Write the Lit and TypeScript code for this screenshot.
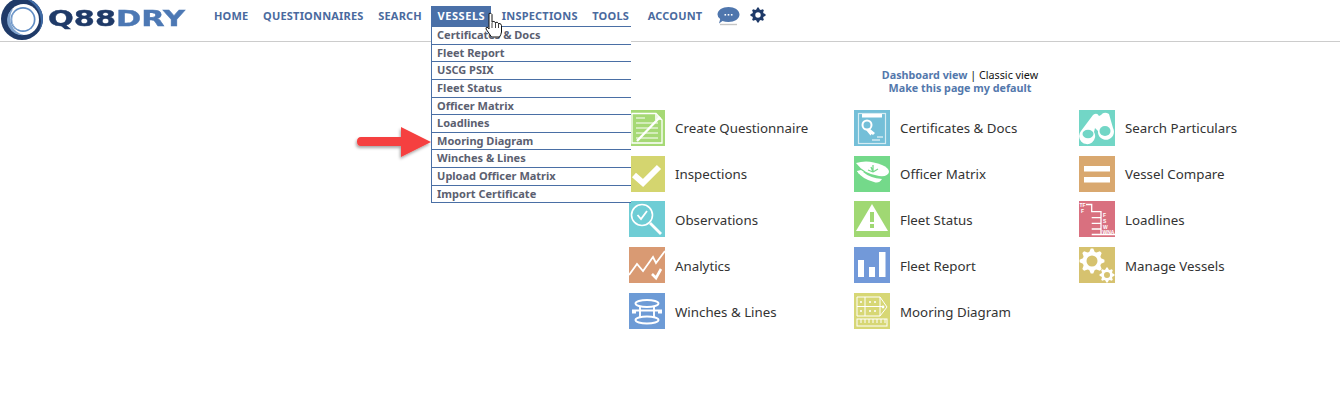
import { LitElement, html, css, svg } from "lit";
import { customElement } from "lit/decorators.js";

const gear = (cx: number, cy: number, r: number, teeth: number, hole: number) => {
  const pts: string[] = [];
  const n = teeth * 4;
  for (let i = 0; i < n; i++) {
    const a = ((i - 0.5) / n) * Math.PI * 2;
    const rad = i % 4 < 2 ? r : r * 0.76;
    pts.push(`${(cx + rad * Math.cos(a)).toFixed(2)},${(cy + rad * Math.sin(a)).toFixed(2)}`);
  }
  return svg`<path fill-rule="evenodd" d="M${pts.join("L")}Z M${cx - hole},${cy}a${hole},${hole} 0 1,0 ${hole * 2},0a${hole},${hole} 0 1,0 ${-hole * 2},0Z"/>`;
};

const icons: Record<string, unknown> = {
  create: svg`<g fill="none" stroke="#fff" stroke-width="1"><path stroke-width="1.3" d="M3 3.5H27L33 10V33H3Z"/><path d="M7 8H16M7 13H29M7 18H29M7 23H29M7 28H29"/></g><path d="M8 31L31 7" stroke="#fff" stroke-width="2.4"/><path d="M26 3.5V10H33" fill="#fff" opacity=".8"/>`,
  check: svg`<path d="M5 19L14 27L30 11" fill="none" stroke="#fff" stroke-width="6"/>`,
  observe: svg`<circle cx="13" cy="14" r="10.5" fill="none" stroke="#fff" stroke-width="1.6"/><path d="M21 22L32 33" stroke="#fff" stroke-width="2.8"/><path d="M8.5 14L12 18L18 10" fill="none" stroke="#fff" stroke-width="1.8"/>`,
  analytics: svg`<path d="M0 28L8 17L14 24L24 10L27 16L36 4" fill="none" stroke="#fff" stroke-width="1.8"/><path d="M23 27L27 31L32 22" fill="none" stroke="#fff" stroke-width="2.6"/>`,
  winch: svg`<g fill="none" stroke="#fff" stroke-width="1.9"><ellipse cx="18" cy="10.5" rx="11.5" ry="3.5"/><ellipse cx="18" cy="27" rx="11.5" ry="3.5"/><path d="M11 13V24.5M25 13V24.5"/></g><path d="M3 16.5H33V20.5H29V18.5H7V20.5H3Z" fill="#fff"/>`,
  cert: svg`<rect x="4.5" y="3.5" width="27" height="30" fill="none" stroke="#fff" stroke-opacity=".7" stroke-width="1.2"/><rect x="8" y="4" width="20" height="3.5" fill="#fff"/><circle cx="13" cy="15" r="4.5" fill="none" stroke="#fff" stroke-width="2"/><path d="M15.5 18.5L21 23L19 25L17.5 24L16.5 25.5L12 20Z" fill="#fff"/><path d="M23 27H29M18 30H26" stroke="#fff" stroke-width="1"/>`,
  hat: svg`<path d="M2 7Q14 3 28 9Q35 12 35 16Q34 21 25 20Q10 18 2 7Z" fill="#fff"/><path d="M3 15Q8 23 20 26Q25 28 28 23Q16 22 9 16Z" fill="#fff"/><path d="M3 15L7 14L10 16L5 18Z" fill="#fff"/><path d="M17 11L19 16M19 16L14 14M19 16L24 13M19 9V16" stroke="#74d98a" stroke-width="1.3" fill="none"/>`,
  warn: svg`<path d="M18 3L34 30H2Z" fill="#fff"/><rect x="16" y="11" width="4" height="10" fill="#a0d873"/><rect x="16" y="23" width="4" height="4" fill="#a0d873"/>`,
  bars: svg`<rect x="4" y="13" width="6" height="17" fill="#fff"/><rect x="15" y="20" width="6" height="10" fill="#fff"/><rect x="25" y="5" width="6.5" height="25" fill="#fff"/>`,
  mooring: svg`<g fill="none" stroke="#fff" stroke-width="1"><path d="M3 4H26L33 14L26 23H3Z"/><path d="M11 4V23M26 4V23M3 13.5H28"/><rect x="3" y="26" width="30" height="7"/><path d="M7 26V30M11 26V30M15 26V30M19 26V30M23 26V30M27 26V30M31 26V30"/></g><g fill="#fff"><circle cx="7" cy="9" r="1"/><circle cx="16" cy="9" r="1"/><circle cx="21" cy="9" r="1"/><circle cx="7" cy="18" r="1"/><circle cx="16" cy="18" r="1"/><circle cx="21" cy="18" r="1"/><circle cx="29" cy="14" r="1.4"/></g>`,
  binoc: svg`<path d="M2 21L14 5Q18 2 20 6L22 5Q25 1 30 4L34 18A8 8 0 1 1 19 21L16 18L15 22A8 8 0 1 1 2 21Z" fill="#fff"/><ellipse cx="9" cy="24" rx="5.5" ry="4.2" fill="#72d6c6"/><ellipse cx="26" cy="21" rx="5.5" ry="5" fill="#72d6c6"/>`,
  equal: svg`<rect x="5" y="10" width="26" height="5.5" fill="#fff"/><rect x="5" y="21" width="26" height="5.5" fill="#fff"/>`,
  load: svg`<path d="M7 3.5H12.7V10.7H22V33.5H36M12.7 16.7H22M12.7 22.3H22M12.7 28H22M12.7 33.5H22" fill="none" stroke="#fff" stroke-width="1.3"/><g fill="#fff" font-family="Liberation Sans, sans-serif" font-weight="700" font-size="5"><text x="0.5" y="6">TF</text><text x="2" y="11.5">F</text><text x="24" y="16">F</text><text x="24" y="22">S</text><text x="24" y="27.5">W</text><text x="23.5" y="32.5" textLength="12" lengthAdjust="spacingAndGlyphs">WNA</text></g>`,
  gears: svg`<g fill="#fff">${gear(13, 14, 12.5, 8, 5.5)}${gear(28, 28, 7.5, 8, 3)}</g>`,
};

const items = [
  ["Create Questionnaire", "#a6d975", "create", true],
  ["Certificates & Docs", "#74bfd8", "cert", false],
  ["Search Particulars", "#72d6c6", "binoc", false],
  ["Inspections", "#d4d56f", "check", true],
  ["Officer Matrix", "#74d98a", "hat", false],
  ["Vessel Compare", "#d9a86f", "equal", false],
  ["Observations", "#6fcdd5", "observe", false],
  ["Fleet Status", "#a0d873", "warn", false],
  ["Loadlines", "#d9707f", "load", false],
  ["Analytics", "#d99a73", "analytics", false],
  ["Fleet Report", "#7299d9", "bars", false],
  ["Manage Vessels", "#d6c26f", "gears", false],
  ["Winches & Lines", "#6d9bd6", "winch", false],
  ["Mooring Diagram", "#d7d775", "mooring", false],
] as const;

const menu = ["Certificates & Docs", "Fleet Report", "USCG PSIX", "Fleet Status", "Officer Matrix", "Loadlines", "Mooring Diagram", "Winches & Lines", "Upload Officer Matrix", "Import Certificate"];

@customElement("app-root")
export class AppRoot extends LitElement {
  static styles = css`
    :host { display: block; position: relative; height: 415px; overflow: hidden; background: #fff; font-family: "Noto Sans", "DejaVu Sans", sans-serif; }
    header { display: flex; align-items: flex-start; height: 41px; border-bottom: 1px solid #ccc; box-sizing: content-box; }
    .logo { display: flex; width: 214px; flex: none; }
    .ring { display: block; flex: none; }
    .word { font: bold 22px/1 "DejaVu Sans", sans-serif; transform: scaleX(1.38); transform-origin: left top; margin: 8px 0 0 4px; -webkit-text-stroke: .4px currentColor; white-space: nowrap; color: #1f3a68; height: 22px; }
    .word span { color: #4c78b4; }
    nav { display: flex; align-items: flex-start; padding-top: 6px; gap: 14.6px; }
    nav a { display: block; height: 20px; line-height: 20px; font-size: 11px; font-weight: 700; letter-spacing: .2px; color: #4a6a9e; white-space: nowrap; }
    nav .account { margin-left: 4px; }
    .vessels { position: relative; margin-right: -4px; margin-left: -6px; }
    .vessels a { background: #4a70a8; color: #fff; padding: 0 6px 0 7px; letter-spacing: .55px; }
    .drop { position: absolute; left: 0; top: 20px; width: 200px; box-sizing: border-box; background: #fff; border-left: 1px solid #4a6fa5; border-top: 1px solid #4a6fa5; z-index: 2; }
    .drop div { height: 17.65px; box-sizing: border-box; border-bottom: 1px solid #4a6fa5; padding-left: 5.5px; font-size: 11px; line-height: 16.6px; font-weight: 700; color: #5b6070; white-space: nowrap; }
    .chat { margin-top: -1px; }
    .gear { margin-left: -5px; margin-top: 1px; }
    main { margin-left: 629px; width: 662px; padding-top: 27px; }
    .views { text-align: center; font-size: 10.75px; line-height: 13px; font-weight: 700; color: #5378ac; }
    .views span { font-weight: 400; color: #111; }
    .grid { display: grid; grid-template-columns: repeat(3, 225px); grid-auto-rows: 46px; margin-top: 15px; }
    .cell { display: flex; align-items: flex-start; gap: 10px; font-size: 13.3px; line-height: 36px; color: #333; white-space: nowrap; }
    .tile { display: block; width: 36px; height: 36px; flex: none; }
    .trim { clip-path: inset(0 0 0 1.5px); }
    .up { margin-top: -1px; margin-bottom: 1px; }
    .arrow { position: absolute; left: 350px; top: 120px; overflow: visible; }
    .hand { position: absolute; left: 484px; top: 12px; z-index: 3; }
  `;

  render() {
    return html`
      <header>
        <div class="logo">
          <svg class="ring" width="44" height="41" viewBox="0 0 44 41">
            <circle cx="22" cy="19" r="21" fill="#1f3a68"/>
            <path d="M22 -2A21 21 0 0 1 43 19A21 21 0 0 1 39 31A24 24 0 0 0 22 -2Z" fill="#3f6ba6"/>
            <circle cx="23.5" cy="19.5" r="15.5" fill="#fff"/>
            <path d="M11 10A15 15 0 0 0 24 35A17 17 0 0 1 13 9Z" fill="#7ea2cd"/>
            <circle cx="23" cy="19.5" r="12.5" fill="#5f8cc4"/>
            <circle cx="23" cy="19.5" r="10.8" fill="#fff"/>
            <path d="M15 11A12 12 0 0 0 20 31A13 13 0 0 1 15 11Z" fill="#b4c9e2"/>
            <circle cx="23" cy="19.5" r="9" fill="#fff"/>
          </svg>
          <div class="word">Q88<span>DRY</span></div>
        </div>
        <nav>
          <a>HOME</a><a>QUESTIONNAIRES</a><a>SEARCH</a>
          <div class="vessels"><a>VESSELS</a>
            <div class="drop">${menu.map((m) => html`<div>${m}</div>`)}</div>
          </div>
          <a>INSPECTIONS</a><a>TOOLS</a><a class="account">ACCOUNT</a>
          <svg class="chat" width="23" height="21" viewBox="0 0 23 21">
            <path d="M11.5 2C17.5 2 22.5 5 22.5 9.5S17.5 17 11.5 17Q8 17 5.5 16L2 18.5L3.2 14Q.5 12.2.5 9.5C.5 5 5.5 2 11.5 2Z" fill="#4f76ad"/>
            <path d="M3 19.5H20" stroke="#c6c6c6" stroke-width="1.4"/>
            <g fill="#fff"><rect x="7.5" y="9" width="1.6" height="1.6"/><rect x="10.7" y="9" width="1.6" height="1.6"/><rect x="13.9" y="9" width="1.6" height="1.6"/></g>
          </svg>
          <svg class="gear" width="16" height="16" viewBox="0 0 16 16"><g fill="#1f3a68">${gear(8, 8, 7.6, 8, 2.7)}</g></svg>
        </nav>
      </header>
      <main>
        <div class="views">Dashboard view <span>| Classic view</span><br />Make this page my default</div>
        <div class="grid">
          ${items.map(
            ([label, color, key, trim], i) => html`
              <div class="cell">
                <svg class="tile ${trim ? "trim" : ""} ${i >= 6 ? "up" : ""}" viewBox="0 0 36 36" style="background:${color}">${icons[key]}</svg>
                <span>${label}</span>
              </div>`
          )}
        </div>
      </main>
      <svg class="arrow" width="90" height="45" viewBox="0 0 90 45">
        <defs><filter id="s" x="-20%" y="-30%" width="140%" height="170%"><feDropShadow dx="-1" dy="2" stdDeviation="1.6" flood-color="#000" flood-opacity=".35"/></filter></defs>
        <path d="M81 22L51 7V17H11Q7 17 7 21.5T11 26H51V37Z" fill="#f5403f" filter="url(#s)"/>
      </svg>
      <svg class="hand" width="20" height="28" viewBox="0 0 20 28">
        <path d="M5 1.5Q7 .5 8 2.5V10Q10 8.5 11.5 10.5Q13.5 9.5 14.5 11.5Q17 11 17.5 13.5V20Q17 23 15.5 25H7.5L2 17Q1.5 14.5 4 15.5L5 17Z" fill="#fff" stroke="#111" stroke-width="1"/>
        <path d="M8 10.5V16M11.5 10.5V16M14.5 11.5V16" stroke="#111" stroke-width=".8" fill="none"/>
      </svg>
    `;
  }
}
